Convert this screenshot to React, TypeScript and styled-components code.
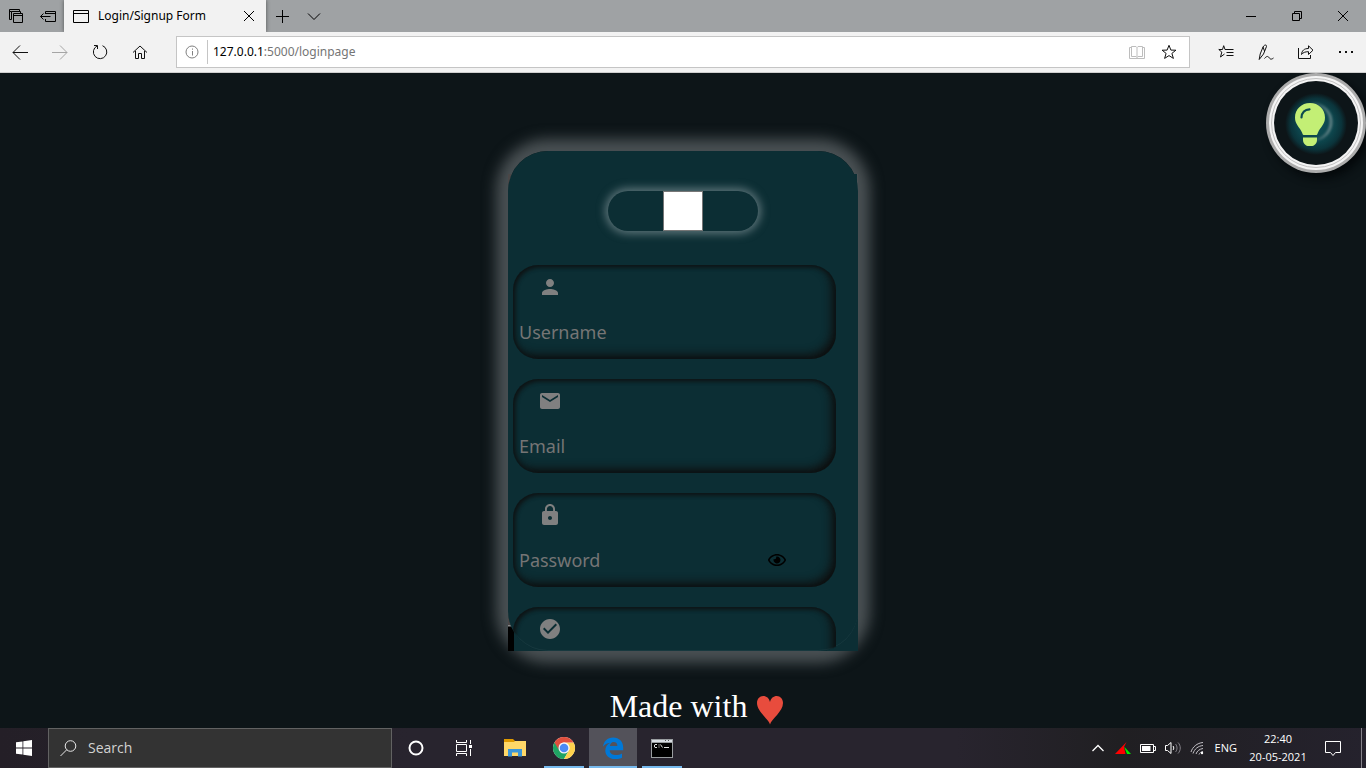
import React from "react";
import styled, { createGlobalStyle } from "styled-components";
import { MdPerson, MdEmail, MdLock, MdCheckCircle } from "react-icons/md";
import { FaRegEye } from "react-icons/fa";

const GlobalStyle = createGlobalStyle`
  *, *::before, *::after { box-sizing: border-box; }
  body { margin: 0; background: #0d1518; font-family: "Noto Sans", "Open Sans", sans-serif; }
  button { font: inherit; color: inherit; background: none; border: 0; padding: 0; margin: 0; }
  svg { display: block; flex: none; }
`;

const Screen = styled.div`
  display: flex;
  flex-direction: column;
  height: 100vh;
  min-height: 480px;
  overflow: hidden;
`;

/* ---------- browser chrome ---------- */

const TabStrip = styled.header`
  display: flex;
  flex: none;
  height: 32px;
  background: #9fa2a4;
  color: #000;
`;

const StripButton = styled.button<{ $width: number }>`
  display: flex;
  align-items: center;
  justify-content: center;
  width: ${(p) => p.$width}px;
  height: 32px;
`;

const Tab = styled.div`
  display: flex;
  align-items: center;
  width: 202px;
  padding: 0 10px 0 9px;
  background: #f2f2f2;
  box-shadow: 0 0 4px rgba(0, 0, 0, 0.5);
  clip-path: inset(0 -5px);
`;

const TabTitle = styled.span`
  flex: 1;
  margin-left: 9px;
  font: 12px/16px "Noto Sans", sans-serif;
  white-space: nowrap;
`;

const Spacer = styled.div`
  flex: 1;
`;

const Toolbar = styled.nav`
  display: flex;
  flex: none;
  align-items: center;
  height: 41px;
  background: #f2f2f2;
  border-bottom: 1px solid #cfcfcf;
`;

const ToolButton = styled.button<{ $dim?: boolean }>`
  display: flex;
  align-items: center;
  justify-content: center;
  width: 40px;
  height: 40px;
  color: ${(p) => (p.$dim ? "#a5a5a5" : "#111")};
`;

const AddressBar = styled.div`
  display: flex;
  align-items: center;
  flex: 1;
  height: 32px;
  margin: 0 16px;
  padding: 0 12px 0 8px;
  background: #fff;
  border: 1px solid #c5c5c5;
`;

const AddressText = styled.div`
  flex: 1;
  height: 24px;
  margin-left: 8px;
  padding-left: 5px;
  border-left: 1px solid #c5c5c5;
  font: 12px/24px "Noto Sans", sans-serif;
  color: #757575;
  b { font-weight: 400; color: #000; }
`;

const AddressIcons = styled.div`
  display: flex;
  gap: 16px;
`;

/* ---------- login page ---------- */

const Page = styled.main`
  position: relative;
  display: flex;
  flex: 1;
  flex-direction: column;
  align-items: center;
  min-height: 0;
  padding-top: 78px;
  overflow: hidden;
  background: #0d1518;
`;

const LampButton = styled.button`
  position: absolute;
  top: 0;
  right: 0;
  width: 100px;
  height: 100px;
  border-radius: 50%;
  box-shadow: 5px 5px 10px #04080a;
`;

const CardShell = styled.section`
  position: relative;
  flex: none;
  width: 350px;
  height: 500px;
  border-radius: 40px;
  box-shadow: 0 0 14px 12px #4a5154;

  &::before {
    content: "";
    position: absolute;
    inset: 23px 0 0;
    background:
      linear-gradient(#4b4747 451px, #8a8a8a 451px, #8a8a8a 452px, #000 453px) left / 6px 100% no-repeat,
      linear-gradient(#4a5154, #4a5154) right top / 1px 20px no-repeat,
      #0c2e34;
  }
`;

const Card = styled.form`
  position: relative;
  display: flex;
  flex-direction: column;
  height: 100%;
  padding: 40px 22px 0 5px;
  overflow: hidden;
  border-radius: 40px;
  background: #0c2e34;
  box-shadow: inset 0 -1px 0 #17383e;
`;

const Toggle = styled.div`
  display: flex;
  flex: none;
  justify-content: center;
  width: 150px;
  height: 40px;
  margin: 0 0 34px 95px;
  border-radius: 20px;
  box-shadow: 0 0 8px 3px #5a7277;
`;

const ToggleKnob = styled.button`
  width: 40px;
  height: 40px;
  background: #fff;
  border: 1px solid #767676;
`;

const Fields = styled.div`
  display: flex;
  flex-direction: column;
  gap: 20px;
`;

const Field = styled.label`
  display: flex;
  flex: none;
  flex-direction: column;
  height: 94px;
  padding: 10px 50px 0 6px;
  border-radius: 25px;
  color: #808080;
  box-shadow: inset 2px 2px 4px #0e1213, inset -4px -4px 10px #0e0e0e;
`;

const FieldIcon = styled.span`
  display: block;
  margin-left: 19px;
`;

const InputRow = styled.span`
  display: flex;
  align-items: center;
  margin-top: 20px;
  color: #000;
`;

const Input = styled.input`
  flex: 1;
  min-width: 0;
  height: 26px;
  padding: 0;
  border: 0;
  outline: 0;
  background: none;
  color: #ccc;
  font: 18px/26px "Noto Sans", sans-serif;
  &::placeholder { color: #757575; opacity: 1; }
`;

const Credit = styled.p`
  display: flex;
  align-items: flex-end;
  gap: 9px;
  margin: 37px 0 0 28px;
  font: 32px/37px "Liberation Serif", serif;
  color: #fff;
  white-space: nowrap;
`;

/* ---------- taskbar ---------- */

const Taskbar = styled.footer`
  display: flex;
  flex: none;
  height: 40px;
  background: linear-gradient(90deg, #241f27, #28242e 30%, #28242e 70%, #201f22 82%, #25222d);
  color: #fff;
`;

const TaskButton = styled.button<{ $active?: boolean; $running?: boolean }>`
  display: flex;
  align-items: center;
  justify-content: center;
  width: 48px;
  height: 40px;
  background: ${(p) => (p.$active ? "#53525a" : "transparent")};
  box-shadow: ${(p) => (p.$running ? "inset 0 -2px 0 #76b9ed" : "none")};
`;

const TaskApps = styled.div`
  display: flex;
  & > :nth-child(3) { margin-left: 3px; }
  & > :nth-child(4) { width: 40px; margin-left: 5px; }
  & > :nth-child(5) { margin-left: 5px; }
  & > :nth-child(6) { width: 40px; margin-left: 5px; }
`;

const SearchBox = styled.label`
  display: flex;
  align-items: center;
  width: 344px;
  height: 40px;
  padding: 0 11px;
  gap: 11px;
  background: #333;
  border: 1px solid #626262;
`;

const SearchInput = styled.input`
  flex: 1;
  min-width: 0;
  padding: 0;
  border: 0;
  outline: 0;
  background: none;
  color: #fff;
  font: 14px/20px "Open Sans", sans-serif;
  &::placeholder { color: #d2d2d2; opacity: 1; }
`;

const Tray = styled.div`
  display: flex;
  align-items: center;
  gap: 9px;
  font: 11px/18px "Open Sans", sans-serif;
`;

const Clock = styled.time`
  width: 60px;
  margin-left: 2px;
  text-align: center;
  white-space: nowrap;
`;

const DesktopPeek = styled.button`
  width: 5px;
  height: 40px;
  margin-left: 3px;
  border-left: 1px solid #85828a;
`;

/* ---------- drawings ---------- */

type LineProps = { size?: number; width?: number; children: React.ReactNode };

const Line = ({ size = 16, width = 1, children }: LineProps) => (
  <svg width={size} height={size} viewBox={`0 0 ${size} ${size}`} fill="none" stroke="currentColor" strokeWidth={width} aria-hidden="true">
    {children}
  </svg>
);

const star = "M8 1.3l1.9 4.8 5 .1-4 3.2 1.5 5L8 11.6l-4.4 2.8 1.5-5-4-3.2 5-.1z";

const LampArt = () => (
  <svg width="100" height="100" viewBox="0 0 100 100" aria-hidden="true">
    <defs>
      <radialGradient id="halo">
        <stop offset="0" stopColor="#105058" />
        <stop offset="0.6" stopColor="#0d444b" />
        <stop offset="0.82" stopColor="#0b343b" />
        <stop offset="1" stopColor="#0d1518" />
      </radialGradient>
      <linearGradient id="crescent" x1="0" x2="1">
        <stop offset="0.4" stopColor="#5d7f83" stopOpacity="0" />
        <stop offset="1" stopColor="#5d7f83" />
      </linearGradient>
      <filter id="soft" x="-20%" y="-20%" width="140%" height="140%">
        <feGaussianBlur stdDeviation="0.8" />
      </filter>
    </defs>
    <circle cx="50" cy="50" r="50" fill="#acacac" />
    <circle cx="50" cy="50" r="47" fill="#f4f4f4" />
    <circle cx="50" cy="50" r="44.5" fill="none" stroke="#c2c2c2" strokeWidth="1" />
    <circle cx="50" cy="50" r="42" fill="#0d1518" />
    <circle cx="50" cy="51" r="31" fill="url(#halo)" />
    <circle cx="47" cy="49" r="18" fill="none" stroke="url(#crescent)" strokeWidth="3" filter="url(#soft)" />
    <path d="M44 30c-8.500 0-15 6.300-15 14.500 0 7 4.600 9.500 7 15 .6 1.400.8 2.500 1.500 2.500h13c.7 0 .9-1.100 1.500-2.500 2.400-5.500 7-8 7-15C59 36.300 52.500 30 44 30z" fill="#c3ef75" />
    <path d="M35.500 44.500c.2-5 3.500-8 8-8.200" fill="none" stroke="#0c4a50" strokeWidth="2.200" strokeLinecap="round" />
    <path d="M37 64.500h14v2.500c0 2-1 3.500-2 4.600-.8.9-1.400 1.400-2.600 1.400h-4.800c-1.200 0-1.800-.5-2.600-1.400-1-1.100-2-2.600-2-4.600z" fill="#c3ef75" />
  </svg>
);

const ChromeArt = () => (
  <svg width="24" height="24" viewBox="0 0 24 24" aria-hidden="true">
    <circle cx="12" cy="12" r="11" fill="#fff" />
    <path d="M12 12L2.470 6.500A11 11 0 0 0 12 23l4.800-8.200z" fill="#1fa463" />
    <path d="M12 6.500h9.530A11 11 0 0 1 12 23l4.760-8.250A5.500 5.500 0 0 0 12 6.500z" fill="#ffd24d" />
    <path d="M2.470 6.500a11 11 0 0 1 19.060 0H12a5.500 5.500 0 0 0-4.760 8.250z" fill="#e04f3d" />
    <circle cx="12" cy="12" r="5.500" fill="#f4f4f4" />
    <circle cx="12" cy="12" r="4.300" fill="#4a8af4" />
  </svg>
);

const EdgeArt = () => (
  <svg width="22" height="22" viewBox="0 0 22 22" aria-hidden="true">
    <path d="M1 9.800C1.600 4.600 5.300.5 11.200.5c6 0 10 4.200 10 10.100v2.600H7.700c.1 3.300 3 4.900 6.300 4.900 2.300 0 4.300-.6 6-1.600v4.200c-1.800 1-4.200 1.500-6.800 1.500-6 0-9.900-3.500-9.900-8.600 0-3.600 2-6.300 5-7.800C4.900 6.200 2.500 7.700 1 9.800zm6.900-.7h7.500c0-2.400-1.300-4-3.700-4-2.300 0-3.600 1.900-3.800 4z" fill="#0078d7" fillRule="evenodd" />
  </svg>
);

const FolderArt = () => (
  <svg width="22" height="20" viewBox="0 0 22 20" aria-hidden="true">
    <path d="M0 1h9l2 2h10v5H0z" fill="#e09a00" />
    <path d="M0 4h10l1-1h11v15H0z" fill="#ffd868" />
    <path d="M4 18.500v-7.500h14v7.500h-4v-4H8v4z" fill="#3b97d9" />
  </svg>
);

const ConsoleArt = () => (
  <svg width="22" height="19" viewBox="0 0 22 19" aria-hidden="true">
    <rect width="22" height="19" fill="#999da0" />
    <rect x="1" y="1" width="20" height="2" fill="#d8dde3" />
    <path d="M14 1.500h1M17 1.500h1" stroke="#555" />
    <rect x="1" y="4" width="20" height="14" fill="#000" />
    <path d="M6 5.500H4l-.5.500v2l.5.500h2M8 5.500v1M8 7.500v1M9.500 5.500l2 3M13 8.500h5" fill="none" stroke="#ddd" />
  </svg>
);

const fields = [
  { name: "username", label: "Username", type: "text", Icon: MdPerson },
  { name: "email", label: "Email", type: "email", Icon: MdEmail },
  { name: "password", label: "Password", type: "password", Icon: MdLock },
  { name: "confirm", label: "Confirm Password", type: "password", Icon: MdCheckCircle },
];

export default function App() {
  return (
    <Screen>
      <GlobalStyle />
      <TabStrip>
        <StripButton $width={32} aria-label="Tabs you have set aside">
          <Line><path d="M1.500 9.500v-8h10v2M3.500 11.500H1.500V9M1.500 3.500h2M3.500 11.500v-8h9v2M5.500 5.500h9v9h-9zM5.500 7.500h9" /></Line>
        </StripButton>
        <StripButton $width={32} aria-label="Set these tabs aside">
          <Line><path d="M5.500 6V3.500h10v10h-10V11M5.500 5.500h10M0.500 8.500h10M3.500 5.500l-3 3 3 3" /></Line>
        </StripButton>
        <Tab>
          <Line><path d="M.5 2.500h15v12H.5zM.5 5.500h15" /></Line>
          <TabTitle>Login/Signup Form</TabTitle>
          <StripButton $width={14} aria-label="Close tab">
            <Line size={12}><path d="M1 1l10 10M11 1L1 11" /></Line>
          </StripButton>
        </Tab>
        <StripButton $width={32} aria-label="New tab">
          <Line><path d="M8.500 2v13M2 8.500h13" /></Line>
        </StripButton>
        <StripButton $width={32} aria-label="Show tab previews">
          <Line><path d="M2 5.500l6 6 6-6" /></Line>
        </StripButton>
        <Spacer />
        <StripButton $width={46} aria-label="Minimize">
          <Line size={10}><path d="M0 5.500h10" /></Line>
        </StripButton>
        <StripButton $width={46} aria-label="Restore">
          <Line size={10}><path d="M.5 2.500h7v7h-7zM2.500 2.500v-2h7v7h-2" /></Line>
        </StripButton>
        <StripButton $width={46} aria-label="Close">
          <Line size={10}><path d="M0 0l10 10M10 0L0 10" /></Line>
        </StripButton>
      </TabStrip>

      <Toolbar>
        <ToolButton aria-label="Back">
          <Line><path d="M1 8.500h15M8 1.500l-7 7 7 7" /></Line>
        </ToolButton>
        <ToolButton $dim aria-label="Forward">
          <Line><path d="M0 8.500h15M8 1.500l7 7-7 7" /></Line>
        </ToolButton>
        <ToolButton aria-label="Refresh">
          <Line><path d="M10.500 1.700A6.700 6.700 0 1 1 5 2M2 1.500h3.500V5" /></Line>
        </ToolButton>
        <ToolButton aria-label="Home">
          <Line><path d="M1 8.500l7-6.500 7 6.500M3.500 7v7.500h3v-5h3v5h3V7" /></Line>
        </ToolButton>
        <AddressBar>
          <Line size={14}>
            <circle cx="7" cy="7" r="6" stroke="#808080" />
            <path d="M7.500 6v4.500M7.500 3.500v1.200" stroke="#808080" />
          </Line>
          <AddressText><b>127.0.0.1</b>:5000/loginpage</AddressText>
          <AddressIcons>
            <Line><path d="M8 3.500L7 2.500H2.500v10H7l1 1 1-1h4.500v-10H9zM8 3.500v10M2.500 3.500h-2v11h15v-11h-2" stroke="#bdbdbd" /></Line>
            <Line><path d={star} stroke="#111" /></Line>
          </AddressIcons>
        </AddressBar>
        <ToolButton aria-label="Favorites">
          <Line><path d="M9.500 5.500L7 5.500 5.700 1.700 4.500 5.500H.8l3 2.600L2.500 13l4-3M8 5.500h7.500M8.500 8.500h7M8.500 11.500h7" /></Line>
        </ToolButton>
        <ToolButton aria-label="Add notes">
          <Line><path d="M1.200 15.500l1-5.500L5 3C6 .8 8.800.2 8.500 2.500L5.500 10l-4.300 5.500M5 3l1.500 4M6.500 14.500c2-2.500 3.500-2.500 4.500-1s2 2.500 4.500.5" /></Line>
        </ToolButton>
        <ToolButton aria-label="Share">
          <Line><path d="M.5 4v10.500h12V11M3.500 10.500c.4-4 2.600-6 7-6V1.800l4.500 4.400-4.500 4.300V7.700c-3.400 0-5.400.8-7 2.800z" /></Line>
        </ToolButton>
        <ToolButton aria-label="Settings and more">
          <Line width={2}><path d="M1 8h2M7 8h2M13 8h2" /></Line>
        </ToolButton>
      </Toolbar>

      <Page>
        <CardShell>
          <Card>
            <Toggle>
              <ToggleKnob type="button" aria-label="Switch between login and signup" />
            </Toggle>
            <Fields>
              {fields.map(({ name, label, type, Icon }) => (
                <Field key={name}>
                  <FieldIcon><Icon size={24} /></FieldIcon>
                  <InputRow>
                    <Input name={name} type={type} placeholder={label} aria-label={label} />
                    {name === "password" && (
                      <button type="button" aria-label="Show password"><FaRegEye size={18} /></button>
                    )}
                  </InputRow>
                </Field>
              ))}
            </Fields>
          </Card>
        </CardShell>
        <Credit>
          Made with
          <svg width="28" height="30" viewBox="0 0 28 30" role="img" aria-label="love">
            <path d="M14 29.500C12.500 24 1 16.500 1 8c0-4 2.700-7 6.200-7C10.500 1 13.200 3.300 14 7c.8-3.700 3.500-6 6.800-6C24.300 1 27 4 27 8c0 8.500-11.500 16-13 21.500z" fill="#e84c3d" />
          </svg>
        </Credit>
        <LampButton aria-label="Toggle light"><LampArt /></LampButton>
      </Page>

      <Taskbar>
        <TaskButton aria-label="Start">
          <svg width="16" height="16" viewBox="0 0 16 16" fill="#fff" aria-hidden="true">
            <path d="M0 2.300l6.500-.9v6.200H0zM7.300 1.300L16 0v7.600H7.300zM0 8.400h6.500v6.200L0 13.700zM7.300 8.400H16V16l-8.700-1.300z" />
          </svg>
        </TaskButton>
        <SearchBox>
          <Line size={17}>
            <circle cx="10.500" cy="6" r="5.300" stroke="#e8e8e8" />
            <path d="M6.700 9.800L.5 16" stroke="#e8e8e8" />
          </Line>
          <SearchInput type="text" placeholder="Search" aria-label="Search" />
        </SearchBox>
        <TaskApps>
          <TaskButton aria-label="Cortana">
            <Line width={2}><circle cx="8" cy="8" r="6.500" /></Line>
          </TaskButton>
          <TaskButton aria-label="Task view">
            <Line><path d="M.5 0v2.500h10V0M.5 4.500h10v7H.5zM.5 16v-2.500h10V16M14.500 0v4M14.500 9v7" /><path d="M13 6.500h3" strokeWidth="3" /></Line>
          </TaskButton>
          <TaskButton aria-label="File Explorer"><FolderArt /></TaskButton>
          <TaskButton $running aria-label="Chrome"><ChromeArt /></TaskButton>
          <TaskButton $running $active aria-label="Edge"><EdgeArt /></TaskButton>
          <TaskButton $running aria-label="Command Prompt"><ConsoleArt /></TaskButton>
        </TaskApps>
        <Spacer />
        <Tray>
          <Line><path d="M2.500 11L8 5.500l5.500 5.500" strokeWidth="1.300" /></Line>
          <svg width="16" height="16" viewBox="0 0 16 16" aria-hidden="true">
            <path d="M0 14L11.500 2 9 7l1.500 7z" fill="#f00" />
            <path d="M9 6.500L16 14h-4z" fill="#0e0" />
          </svg>
          <Line>
            <path d="M.5 4.500h13v8H.5zM13.500 6.500h2v4h-2" />
            <path d="M2 6h8.500v5H2z" fill="currentColor" stroke="none" />
          </Line>
          <Line>
            <path d="M.5 5.500h2L6 2.500v11l-3.500-3h-2zM8 6c1 1.200 1 3 0 4" />
            <path d="M10.500 4c2 2.300 2 5.800 0 8M13 2.500c3 3 3 8 0 11" stroke="#85828a" />
          </Line>
          <Line>
            <path d="M1 12C2.500 7 7 3 13 2.500M3 13.500C4.500 9 8 6 13 5.500M6 14c1-3 3.500-5 7-5.500M9 14.500c.6-1.500 2-2.700 4-3" stroke="#c4c2c8" />
            <circle cx="12" cy="13" r="1.200" fill="#fff" stroke="none" />
          </Line>
          <span>ENG</span>
          <Clock>22:40<br />20-05-2021</Clock>
          <StripButton $width={32} aria-label="Notifications">
            <Line><path d="M.5 1.500h15v11h-5l-2.500 3-2.500-3h-5z" /></Line>
          </StripButton>
          <DesktopPeek aria-label="Show desktop" />
        </Tray>
      </Taskbar>
    </Screen>
  );
}
